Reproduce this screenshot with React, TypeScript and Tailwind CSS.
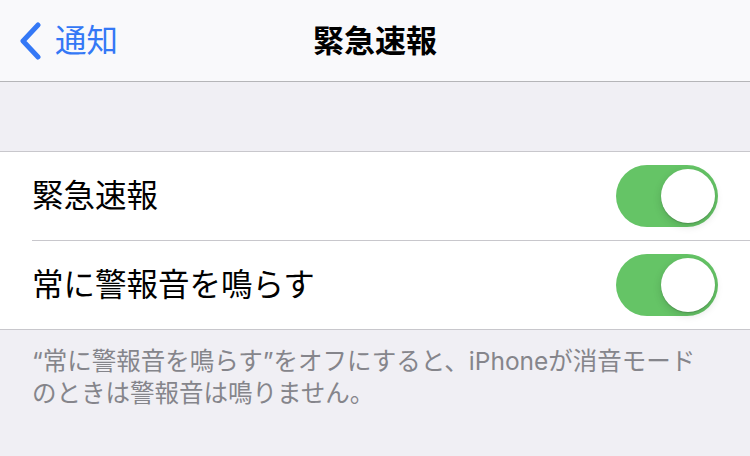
const jp = "font-['Inter','Noto_Sans_CJK_JP',sans-serif]";

function Toggle() {
  return (
    <div className="relative w-[102px] h-[62px] rounded-full bg-[#65c466] shrink-0">
      <div className="absolute right-[3px] top-[4px] size-[54px] rounded-full bg-white shadow-[0_3px_8px_rgba(0,0,0,0.15),0_1px_1px_rgba(0,0,0,0.16)]" />
    </div>
  );
}

export default function App() {
  return (
    <div className={`w-[750px] h-[456px] bg-[#f0eff4] overflow-hidden ${jp}`}>
      {/* nav bar */}
      <div className="relative flex items-center h-[82px] bg-[#f9f9fb] border-b border-[#b5b5b8]">
        <div className="flex items-center pl-[18px] text-[#3478f6]">
          <svg width="24" height="38" viewBox="0 0 24 38" fill="none">
            <path d="M20 3L5 19L20 35" stroke="currentColor" strokeWidth="5" strokeLinecap="round" strokeLinejoin="round" />
          </svg>
          <span className="ml-[13px] text-[31.5px] leading-none">通知</span>
        </div>
        <div className="absolute inset-x-0 top-0 h-full flex items-center justify-center pointer-events-none">
          <span className="text-[31px] font-bold text-black leading-none">緊急速報</span>
        </div>
      </div>

      <div className="h-[69px]" />

      {/* list */}
      <div className="bg-white border-y border-[#c8c7cc]">
        <div className="flex items-center justify-between h-[88px] pl-[32px] pr-[32px]">
          <span className="text-[31.5px] text-black">緊急速報</span>
          <Toggle />
        </div>
        <div className="ml-[32px] h-px bg-[#c8c7cc]" />
        <div className="flex items-center justify-between h-[88px] pl-[32px] pr-[32px]">
          <span className="text-[31.5px] text-black">常に警報音を鳴らす</span>
          <Toggle />
        </div>
      </div>

      <p className="px-[32px] pt-[15px] text-[24.5px] leading-[32px] text-[#85858b]">
        “常に警報音を鳴らす”をオフにすると、iPhoneが消音モードのときは警報音は鳴りません。
      </p>
    </div>
  );
}
